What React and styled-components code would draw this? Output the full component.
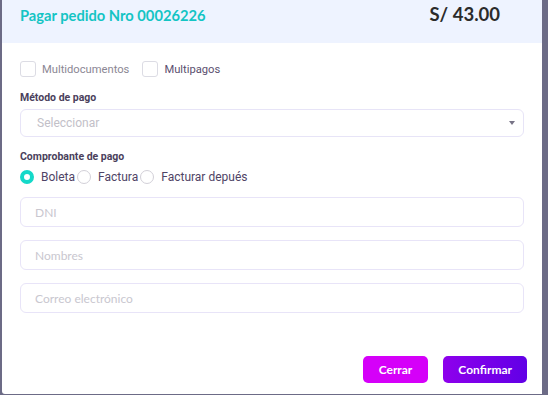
import React from 'react';
import styled, { createGlobalStyle } from 'styled-components';

const Global = createGlobalStyle`
  html, body {
    margin: 0;
    padding: 0;
    background: #6c6b86;
    height: 395px;
    overflow: hidden;
  }
  * { box-sizing: border-box; }
`;

const Page = styled.div`
  padding-left: 2px;
  width: 548px;
  height: 395px;
`;

const Modal = styled.div`
  width: 540px;
  height: 394px;
  background: #fff;
  display: flex;
  flex-direction: column;
  border-bottom-left-radius: 3px;
`;

const Header = styled.div`
  height: 43px;
  background: #eef3ff;
  display: flex;
  align-items: baseline;
  justify-content: space-between;
  padding: 3px 42px 0 18px;
`;

const Title = styled.h1`
  margin: 0;
  font-family: Lato, "Liberation Sans", sans-serif;
  font-weight: 700;
  font-size: 14.7px;
  color: #14c4c4;
`;

const Amount = styled.span`
  font-family: Lato, "Liberation Sans", sans-serif;
  font-weight: 700;
  font-size: 18.5px;
  color: #2b2b2b;
`;

const Body = styled.div`
  flex: 1;
  padding: 17px 18px 0 18px;
  display: flex;
  flex-direction: column;
`;

const CheckRow = styled.div`
  display: flex;
  align-items: center;
  height: 18px;
`;

const Check = styled.span`
  width: 16px;
  height: 16px;
  border: 1px solid #dcdce4;
  border-radius: 3px;
  background: #fff;
  margin-right: 6px;
`;

const CheckLabel = styled.span`
  font-family: Roboto, "Liberation Sans", sans-serif;
  font-size: 11.2px;
  color: ${p => (p.$dark ? '#5b4f70' : '#8b8794')};
  margin-right: 13px;
`;

const Label = styled.div`
  font-family: Roboto, "Liberation Sans", sans-serif;
  font-weight: 700;
  font-size: 10.5px;
  color: #4a3f5c;
  margin-top: 13px;
  margin-bottom: 5px;
`;

const Select = styled.div`
  height: 28px;
  border: 1px solid #e7e4f7;
  border-radius: 6px;
  display: flex;
  align-items: center;
  justify-content: space-between;
  padding: 0 8px 0 16px;
  font-family: Roboto, "Liberation Sans", sans-serif;
  font-size: 12px;
  color: #c2c0c8;
`;

const Caret = styled.span`
  width: 0;
  height: 0;
  border-left: 3.5px solid transparent;
  border-right: 3.5px solid transparent;
  border-top: 4px solid #777386;
`;

const RadioRow = styled.div`
  display: flex;
  align-items: center;
  height: 18px;
`;

const Radio = styled.span`
  width: 14px;
  height: 14px;
  border-radius: 50%;
  background: #fff;
  border: ${p => (p.$on ? '4px solid #14d9c9' : '1px solid #d2d0d8')};
  margin-right: 7px;
`;

const RadioLabel = styled.span`
  font-family: Roboto, "Liberation Sans", sans-serif;
  font-size: 12px;
  color: #4f4466;
  margin-right: 2px;
`;

const Fields = styled.div`
  display: flex;
  flex-direction: column;
  gap: 13px;
  margin-top: 11px;
`;

const Input = styled.input`
  height: 30px;
  width: 100%;
  border: 1px solid #e8e4f8;
  border-radius: 6px;
  padding: 0 14px;
  font-family: Lato, "Liberation Sans", sans-serif;
  font-size: 12px;
  outline: none;
  &::placeholder { color: #c9c7cf; }
`;

const Footer = styled.div`
  display: flex;
  justify-content: flex-end;
  gap: 15px;
  padding: 0 15px 11px 0;
`;

const Btn = styled.button`
  height: 27px;
  border: none;
  border-radius: 5px;
  padding: 0 ${p => p.$px}px;
  font-family: Lato, "Liberation Sans", sans-serif;
  font-weight: 700;
  font-size: 12px;
  color: #fff;
  background: ${p => p.$bg};
`;

export default function App() {
  return (
    <Page>
      <Global />
      <Modal>
        <Header>
          <Title>Pagar pedido Nro 00026226</Title>
          <Amount>S/ 43.00</Amount>
        </Header>
        <Body>
          <CheckRow>
            <Check />
            <CheckLabel>Multidocumentos</CheckLabel>
            <Check />
            <CheckLabel $dark>Multipagos</CheckLabel>
          </CheckRow>
          <Label>Método de pago</Label>
          <Select>
            Seleccionar
            <Caret />
          </Select>
          <Label>Comprobante de pago</Label>
          <RadioRow>
            <Radio $on />
            <RadioLabel>Boleta</RadioLabel>
            <Radio />
            <RadioLabel>Factura</RadioLabel>
            <Radio />
            <RadioLabel>Facturar depués</RadioLabel>
          </RadioRow>
          <Fields>
            <Input placeholder="DNI" />
            <Input placeholder="Nombres" />
            <Input placeholder="Correo electrónico" />
          </Fields>
        </Body>
        <Footer>
          <Btn $px={16} $bg="#d500f9">Cerrar</Btn>
          <Btn $px={15} $bg="linear-gradient(90deg, #8e00ec, #6100e6)">Confirmar</Btn>
        </Footer>
      </Modal>
    </Page>
  );
}
